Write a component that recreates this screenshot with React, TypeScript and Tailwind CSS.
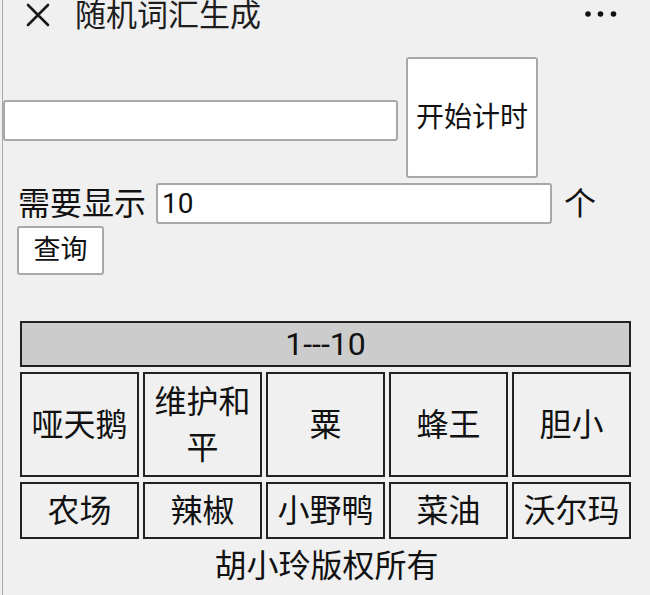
import React from "react";

const font = { fontFamily: 'Roboto, "Noto Sans CJK SC", sans-serif' };

export default function App() {
  const row1 = ["哑天鹅", "维护和平", "粟", "蜂王", "胆小"];
  const row2 = ["农场", "辣椒", "小野鸭", "菜油", "沃尔玛"];
  return (
    <div
      className="w-[650px] h-[595px] overflow-hidden bg-[#f0f0f0] pl-[2px] text-[#111]"
      style={font}
    >
      <div className="h-full border-l border-[#a9a9a9] flex flex-col">
        {/* header */}
        <div className="h-[30px] flex items-center relative">
          <svg
            width="28"
            height="26"
            viewBox="0 0 28 26"
            className="ml-[21px] shrink-0"
          >
            <path
              d="M4 3 L24 23 M24 3 L4 23"
              stroke="#1a1a1a"
              strokeWidth="2.6"
              strokeLinecap="round"
              fill="none"
            />
          </svg>
          <div className="ml-[23px] text-[31px] leading-none text-[#1e1e1e]">
            随机词汇生成
          </div>
          <svg
            width="36"
            height="10"
            viewBox="0 0 36 10"
            className="absolute left-[580px] top-[9px]"
          >
            <circle cx="5" cy="5" r="2.8" fill="#111" />
            <circle cx="17.5" cy="5" r="2.8" fill="#111" />
            <circle cx="30.5" cy="5" r="2.8" fill="#111" />
          </svg>
        </div>

        {/* timer row */}
        <div className="mt-[27px] flex items-center h-[121px]">
          <div className="w-[395px] h-[41px] mt-[6px] bg-white border-2 border-[#a8a8a8] rounded-[3px]" />
          <button className="ml-[8px] w-[132px] h-[121px] bg-white border-2 border-[#a8a8a8] rounded-[3px] text-[28px] leading-none">
            开始计时
          </button>
        </div>

        {/* count row */}
        <div className="mt-[5px] h-[41px] flex items-center pl-[15px]">
          <span className="text-[32px] leading-none">需要显示</span>
          <div className="ml-[10px] w-[396px] h-[41px] bg-white border-2 border-[#a8a8a8] rounded-[3px] flex items-center pl-[4px] text-[28px] leading-none">
            10
          </div>
          <span className="ml-[12px] text-[32px] leading-none">个</span>
        </div>

        {/* query button */}
        <div className="mt-[2px] pl-[14px]">
          <button className="w-[87px] h-[49px] bg-white border-2 border-[#a8a8a8] rounded-[3px] text-[27px] leading-none">
            查询
          </button>
        </div>

        {/* table */}
        <div className="mt-[46px] ml-[17px] w-[611px] grid grid-cols-5 gap-x-[4px] gap-y-[5px]">
          <div className="col-span-5 h-[46px] bg-[#cccccc] border-2 border-[#222] flex items-center justify-center text-[32px] leading-none">
            1---10
          </div>
          {row1.map((w) => (
            <div
              key={w}
              className="h-[105px] border-2 border-[#222] flex items-center justify-center text-center text-[32px] leading-[46px] px-[6px] break-all"
            >
              {w}
            </div>
          ))}
          {row2.map((w) => (
            <div
              key={w}
              className="h-[57px] border-2 border-[#222] flex items-center justify-center text-center text-[32px] leading-[46px] whitespace-nowrap"
            >
              {w}
            </div>
          ))}
        </div>

        {/* footer */}
        <div className="mt-[4px] w-full text-center text-[32px] leading-[46px]">
          胡小玲版权所有
        </div>
      </div>
    </div>
  );
}
